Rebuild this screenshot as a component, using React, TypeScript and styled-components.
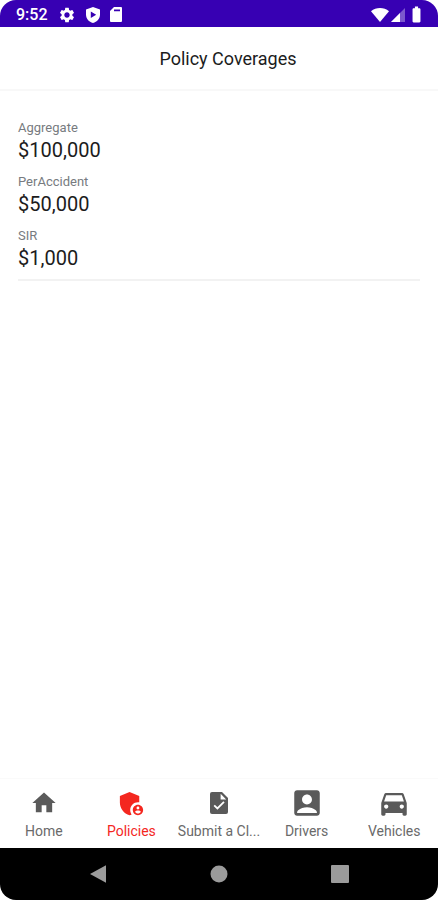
import React from "react";
import styled, { createGlobalStyle } from "styled-components";
import {
  MdAccountBox,
  MdAdminPanelSettings,
  MdBatteryFull,
  MdDirectionsCar,
  MdHome,
  MdSettings,
} from "react-icons/md";

const GlobalStyle = createGlobalStyle`
  *, *::before, *::after { box-sizing: border-box; }
  body {
    margin: 0;
    background: #ffffff;
    font-family: Roboto, "Liberation Sans", sans-serif;
  }
`;

const Screen = styled.div`
  display: flex;
  flex-direction: column;
  min-height: 100vh;
  overflow: hidden;
  border-radius: 16px;
  background: #ffffff;
`;

const StatusBar = styled.div`
  display: flex;
  align-items: center;
  justify-content: space-between;
  height: 27px;
  padding: 2px 12px 0 16px;
  background: #3700b3;
  color: #ffffff;
`;

const StatusGroup = styled.div<{ $gap: number }>`
  display: flex;
  align-items: center;
  gap: ${(p) => p.$gap}px;

  svg {
    display: block;
  }
`;

const Clock = styled.time`
  font-size: 16px;
  line-height: 20px;
  font-weight: 500;
`;

const Header = styled.header`
  display: flex;
  align-items: center;
  justify-content: center;
  height: 64px;
  padding: 2px 0 0 18px;
  border-bottom: 2px solid #f8f8f8;
`;

const Title = styled.h1`
  margin: 0;
  font-size: 18px;
  line-height: 24px;
  font-weight: 400;
  color: #1c1c1c;
`;

const Content = styled.main`
  flex: 1;
  padding: 26px 18px;
`;

const CoverageList = styled.dl`
  display: flex;
  flex-direction: column;
  gap: 10px;
  margin: 0;
  padding-bottom: 10px;
  border-bottom: 2px solid #f2f2f2;
`;

const CoverageLabel = styled.dt`
  font-size: 13px;
  line-height: 22px;
  color: #777b80;
`;

const CoverageValue = styled.dd`
  margin: 0;
  font-size: 20px;
  line-height: 22px;
  color: #1c1c1c;
`;

const TabBar = styled.nav`
  display: grid;
  grid-template-columns: repeat(5, minmax(0, 1fr));
  height: 70px;
  border-top: 1px solid #fafafa;
`;

const Tab = styled.a<{ $active: boolean }>`
  display: flex;
  flex-direction: column;
  align-items: center;
  gap: 4px;
  padding-top: 8px;
  color: ${(p) => (p.$active ? "#f4271f" : "#5a5a5a")};
  text-decoration: none;
`;

const TabIcon = styled.span`
  display: flex;
  align-items: center;
  justify-content: center;
  height: 32px;
`;

const TabLabel = styled.span<{ $active: boolean }>`
  white-space: nowrap;
  font-size: 14px;
  line-height: 16px;
  color: ${(p) => (p.$active ? "#f4271f" : "#6a6a6a")};
`;

const SystemBar = styled.div`
  display: flex;
  align-items: center;
  justify-content: center;
  gap: 91px;
  height: 52px;
  background: #000000;
`;

const SystemButton = styled.button`
  display: flex;
  align-items: center;
  justify-content: center;
  width: 30px;
  height: 30px;
  padding: 0;
  border: 0;
  background: none;
  color: #9b9b9b;
`;

const PlayShield = () => (
  <svg width="14" height="16" viewBox="0 0 14 16" aria-hidden="true">
    <path
      fill="currentColor"
      fillRule="evenodd"
      d="M7 0 14 2.6V7.5C14 11.5 11 15 7 16 3 15 0 11.5 0 7.5V2.6ZM4.8 4.4V11L10.2 7.7Z"
    />
  </svg>
);

const MemoryCard = () => (
  <svg width="12" height="15" viewBox="0 0 12 15" aria-hidden="true">
    <path
      fill="currentColor"
      fillRule="evenodd"
      d="M4 0H11a1 1 0 0 1 1 1V14a1 1 0 0 1-1 1H1a1 1 0 0 1-1-1V4ZM4 2.6V4.2H10V2.6Z"
    />
  </svg>
);

const Wifi = () => (
  <svg width="18" height="14" viewBox="0 0 18 14" aria-hidden="true">
    <path fill="currentColor" d="M0 3.2C5-1 13-1 18 3.2L9 14Z" />
  </svg>
);

const Signal = () => (
  <svg width="14" height="14" viewBox="0 0 14 14" aria-hidden="true">
    <path fill="currentColor" opacity="0.35" d="M14 0V14H0Z" />
    <path fill="currentColor" d="M9 5V14H0Z" />
  </svg>
);

const ClaimDocument = () => (
  <svg width="18" height="22" viewBox="0 0 18 22" aria-hidden="true">
    <path fill="currentColor" d="M2 0H12L18 6V20a2 2 0 0 1-2 2H2a2 2 0 0 1-2-2V2A2 2 0 0 1 2 0Z" />
    <path fill="#ffffff" d="M10.6 1.8 16.2 7.4H10.6Z" />
    <path fill="none" stroke="#ffffff" strokeWidth="1.8" d="M4.2 13.4 7.4 16.4 14 9.8" />
  </svg>
);

const coverages = [
  { label: "Aggregate", value: "$100,000" },
  { label: "PerAccident", value: "$50,000" },
  { label: "SIR", value: "$1,000" },
];

const tabs = [
  { label: "Home", icon: <MdHome size={28} />, active: false },
  { label: "Policies", icon: <MdAdminPanelSettings size={31} />, active: true },
  { label: "Submit a Cl...", icon: <ClaimDocument />, active: false },
  { label: "Drivers", icon: <MdAccountBox size={34} />, active: false },
  { label: "Vehicles", icon: <MdDirectionsCar size={34} />, active: false },
];

export default function App() {
  return (
    <Screen>
      <GlobalStyle />
      <StatusBar>
        <StatusGroup $gap={10}>
          <Clock>9:52</Clock>
          <MdSettings size={18} />
          <PlayShield />
          <MemoryCard />
        </StatusGroup>
        <StatusGroup $gap={2}>
          <Wifi />
          <Signal />
          <MdBatteryFull size={19} />
        </StatusGroup>
      </StatusBar>
      <Header>
        <Title>Policy Coverages</Title>
      </Header>
      <Content>
        <CoverageList>
          {coverages.map(({ label, value }) => (
            <div key={label}>
              <CoverageLabel>{label}</CoverageLabel>
              <CoverageValue>{value}</CoverageValue>
            </div>
          ))}
        </CoverageList>
      </Content>
      <TabBar aria-label="Main">
        {tabs.map(({ label, icon, active }) => (
          <Tab key={label} href="#" $active={active} aria-current={active ? "page" : undefined}>
            <TabIcon>{icon}</TabIcon>
            <TabLabel $active={active}>{label}</TabLabel>
          </Tab>
        ))}
      </TabBar>
      <SystemBar>
        <SystemButton type="button" aria-label="Back">
          <svg width="18" height="20" viewBox="0 0 18 20">
            <path fill="currentColor" d="M17 1.2V18.8L1 10Z" />
          </svg>
        </SystemButton>
        <SystemButton type="button" aria-label="Home">
          <svg width="18" height="18" viewBox="0 0 18 18">
            <circle fill="currentColor" cx="9" cy="9" r="8.5" />
          </svg>
        </SystemButton>
        <SystemButton type="button" aria-label="Recent apps">
          <svg width="18" height="18" viewBox="0 0 18 18">
            <rect fill="currentColor" width="18" height="18" rx="1" />
          </svg>
        </SystemButton>
      </SystemBar>
    </Screen>
  );
}
